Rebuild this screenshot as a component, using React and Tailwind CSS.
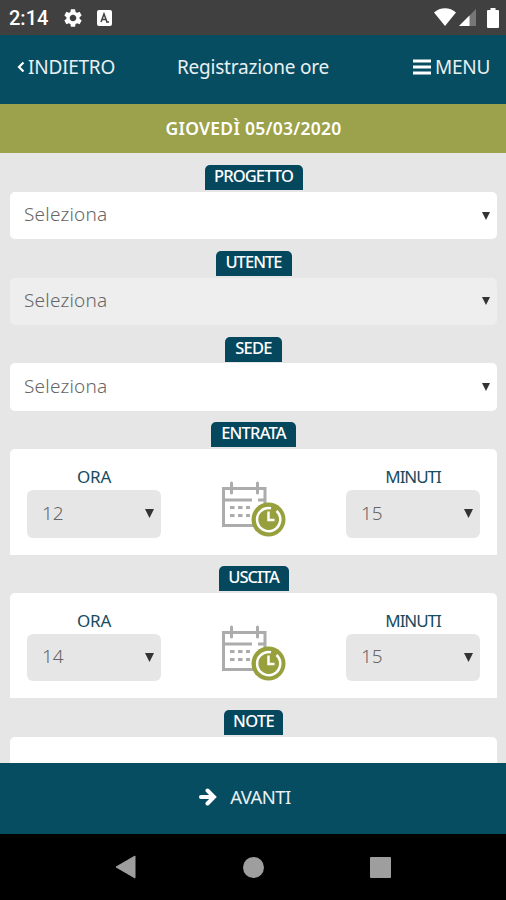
import { MdSettings } from 'react-icons/md'

const PROJECT_FIELDS = [
  { label: 'PROGETTO', tab: 'w-[98px] tracking-[-0.9px]', box: 'bg-white' },
  { label: 'UTENTE',   tab: 'w-[76px] tracking-[-0.95px]', box: 'bg-[#eeeeee]' },
  { label: 'SEDE',     tab: 'w-[57px] tracking-[-0.7px]',  box: 'bg-white' },
]

const TIME_FIELDS = [
  { label: 'ENTRATA', tab: 'w-[85px] tracking-[-0.8px]', hour: '12', minutes: '15' },
  { label: 'USCITA',  tab: 'w-[70px] tracking-[-1px]', hour: '14', minutes: '15' },
]

export default function App() {
  return (
    <div className="flex h-[900px] w-[506px] flex-col overflow-hidden bg-[#e6e6e6] font-['Noto_Sans',sans-serif]">
      <StatusBar />
      <Header />
      <div className="flex h-[49px] shrink-0 items-center justify-center bg-[#9ba24b] pl-[1px] text-[17.5px] font-semibold text-white">
        <span className="tracking-[0.25px]">GIOVEDÌ 05/03/2020</span>
      </div>

      <main className="flex min-h-0 flex-1 flex-col gap-[11.5px] overflow-hidden pt-[12px] pr-[9px] pl-[10px]">
        {PROJECT_FIELDS.map(f => (
          <Section key={f.label} label={f.label} tab={f.tab}>
            <div className={`flex h-[47.5px] items-center justify-between rounded-[5px] pr-[7px] pl-[14px] ${f.box}`}>
              <span className="pb-[2px] text-[19px] font-light tracking-[0.2px] text-[#666]">Seleziona</span>
              <Caret className="h-[8px] w-[8px]" />
            </div>
          </Section>
        ))}
        {TIME_FIELDS.map(f => (
          <Section key={f.label} label={f.label} tab={f.tab}>
            <div className="flex h-[105.5px] justify-between rounded-t-[5px] bg-white px-[17px] pt-[17px]">
              <TimeSelect label="ORA" labelClass="tracking-[-0.2px]" value={f.hour} />
              <CalendarClock />
              <TimeSelect label="MINUTI" labelClass="tracking-[-1.05px]" value={f.minutes} />
            </div>
          </Section>
        ))}
        <Section label="NOTE" tab="w-[59px] tracking-[-0.7px]">
          <div className="h-[105px] rounded-t-[5px] bg-white" />
        </Section>
      </main>

      <footer className="flex h-[71px] shrink-0 items-center justify-center bg-[#074d62] pr-[16px] pb-[3px] text-white">
        <svg className="mr-[13px]" width="18" height="18" viewBox="0 0 18 18">
          <path d="M2 9h13M8.500 2.500L15 9l-6.500 6.500" fill="none" stroke="#fff" strokeWidth="4" strokeLinecap="round" />
        </svg>
        <span className="text-[18.5px] tracking-[-0.6px] text-[#e9f0f2]">AVANTI</span>
      </footer>
      <NavBar />
    </div>
  )
}

/* ── Android status bar ── */
function StatusBar() {
  return (
    <div className="flex h-[35px] shrink-0 items-center bg-[#404040] pr-[7px] pl-[9px] text-white">
      <span className="w-[53px] font-['Roboto',sans-serif] text-[20px] font-medium">2:14</span>
      <MdSettings className="size-[22px]" />
      <svg className="ml-[13px]" width="15" height="16" viewBox="0 0 15 16">
        <rect width="15" height="16" rx="2" fill="#fff" />
        <path d="M4 12L7 4l3 8M5 9.500h4M9 12h3" fill="none" stroke="#404040" strokeWidth="1.500" />
      </svg>
      <svg className="ml-auto" width="22" height="19" viewBox="0 0 22 19">
        <path d="M0 4.500C6-1.200 16-1.200 22 4.500L11 18z" fill="#fff" />
      </svg>
      <svg className="ml-[3px]" width="17" height="17" viewBox="0 0 17 17">
        <path d="M17 0v17H0z" fill="#777" />
        <path d="M10.500 6.500V17H0z" fill="#fff" />
      </svg>
      <svg className="ml-[11px]" width="12" height="20" viewBox="0 0 12 20">
        <path d="M3.500 0h5v2H11q1 0 1 1v16q0 1-1 1H1q-1 0-1-1V3q0-1 1-1h2.500z" fill="#fff" />
      </svg>
    </div>
  )
}

function Header() {
  return (
    <header className="grid h-[69px] shrink-0 grid-cols-[1fr_auto_1fr] items-center bg-[#074d62] px-[16px] pb-[5px] text-[19px] text-[#e9f0f2]">
      <div className="flex items-center">
        <svg className="mr-[3px] ml-[1px]" width="8" height="12" viewBox="0 0 8 12">
          <path d="M6.500 1.500L2 6l4.500 4.500" fill="none" stroke="#fff" strokeWidth="2.200" />
        </svg>
        <span className="tracking-[-0.25px]">INDIETRO</span>
      </div>
      <span className="tracking-[-0.2px]">Registrazione ore</span>
      <div className="flex items-center justify-end">
        <svg className="mr-[4px]" width="18" height="16" viewBox="0 0 18 16">
          <path d="M0 2h18M0 8h18M0 14h18" stroke="#fff" strokeWidth="3" />
        </svg>
        <span className="tracking-[-0.3px]">MENU</span>
      </div>
    </header>
  )
}

/* ── Form ── */
function Section({ label, tab, children }) {
  return (
    <section className="flex shrink-0 flex-col">
      <div className={`mb-[1.75px] flex h-[25px] items-center justify-center self-center rounded-t-[5px] bg-[#05485e] pb-[2px] text-[16.5px] font-medium text-white ${tab}`}>
        {label}
      </div>
      {children}
    </section>
  )
}

function Caret({ className }) {
  return (
    <svg className={className} viewBox="0 0 8 8" preserveAspectRatio="none">
      <path d="M0 0h8L4 8z" fill="#333" />
    </svg>
  )
}

function TimeSelect({ label, labelClass, value }) {
  return (
    <div className="flex w-[134px] flex-col">
      <span className={`h-[24px] text-center text-[17px] leading-[21px] text-[#174a60] ${labelClass}`}>{label}</span>
      <div className="flex h-[47.5px] items-center justify-between rounded-[6px] bg-[#e6e6e6] pr-[7px] pl-[15px]">
        <span className="pb-[2px] text-[19px] font-light text-[#666]">{value}</span>
        <Caret className="h-[9px] w-[9px]" />
      </div>
    </div>
  )
}

function CalendarClock() {
  return (
    <svg className="mt-[15px]" width="65" height="58" viewBox="0 0 65 58">
      {/* calendar */}
      <g fill="none" stroke="#acacac" strokeWidth="3">
        <path d="M33 44.500H2.500V7.500H44V24" />
        <path d="M2.500 19H31M37 19h7" />
        <path d="M10.500 2v10M36.500 2v10" strokeLinecap="round" />
        <path d="M9 26.500h20M9 34.500h20" strokeDasharray="4.500 3.500" />
      </g>
      {/* clock badge */}
      <circle cx="47.500" cy="38.500" r="17" fill="#97a03d" />
      <path d="M55.500 30a11.600 11.600 0 1 1-5.500-2.800" fill="none" stroke="#fff" strokeWidth="2.500" />
      <path d="M47.500 30.500v8.500h6" fill="none" stroke="#fff" strokeWidth="2.500" />
    </svg>
  )
}

function NavBar() {
  return (
    <nav className="flex h-[66px] shrink-0 items-center justify-between bg-black pr-[115px] pl-[115px]">
      <svg width="21" height="24" viewBox="0 0 21 24">
        <path d="M20 1v22L1 12z" fill="#9e9e9e" stroke="#9e9e9e" strokeLinejoin="round" />
      </svg>
      <div className="size-[21px] rounded-full bg-[#9e9e9e]" />
      <div className="size-[21px] rounded-[1px] bg-[#9e9e9e]" />
    </nav>
  )
}
